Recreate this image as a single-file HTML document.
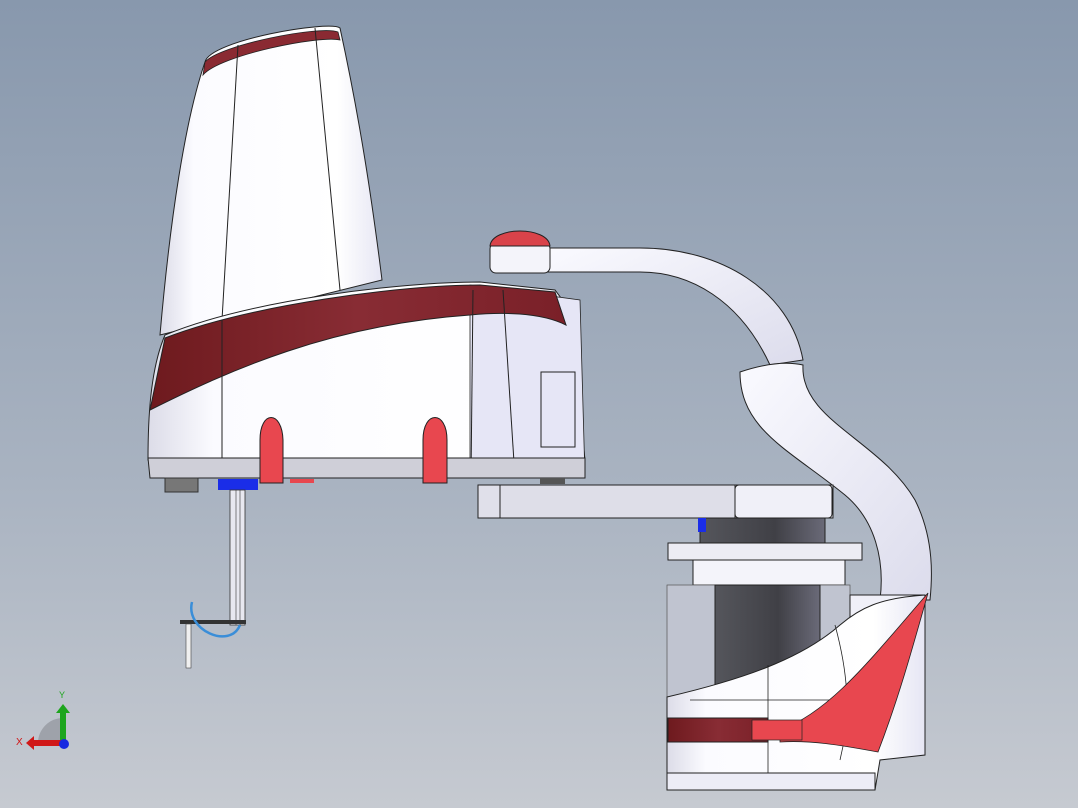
<!DOCTYPE html>
<html><head><meta charset="utf-8"><style>
html,body{margin:0;padding:0;width:1078px;height:808px;overflow:hidden}
svg{display:block}
text{font-family:"Liberation Sans",sans-serif}
</style></head><body>
<svg width="1078" height="808" viewBox="0 0 1078 808" xmlns="http://www.w3.org/2000/svg">
<defs>
<linearGradient id="bg" x1="0" y1="0" x2="0" y2="1">
<stop offset="0" stop-color="#8898ad"/><stop offset="0.6" stop-color="#a9b3c1"/><stop offset="1" stop-color="#c6cad1"/>
</linearGradient>
<linearGradient id="wh" x1="0" y1="0" x2="1" y2="0">
<stop offset="0" stop-color="#dcdce8"/><stop offset="0.15" stop-color="#fbfbff"/><stop offset="0.8" stop-color="#ffffff"/><stop offset="1" stop-color="#e6e6f4"/>
</linearGradient>
<linearGradient id="red" x1="0" y1="0" x2="1" y2="0">
<stop offset="0" stop-color="#6e1a1e"/><stop offset="0.5" stop-color="#882c34"/><stop offset="1" stop-color="#7a2028"/>
</linearGradient>
<linearGradient id="dk" x1="0" y1="0" x2="1" y2="0">
<stop offset="0" stop-color="#55565c"/><stop offset="0.6" stop-color="#404046"/><stop offset="1" stop-color="#6a6a78"/>
</linearGradient>
<linearGradient id="tube" x1="0" y1="0" x2="1" y2="1">
<stop offset="0" stop-color="#fafaff"/><stop offset="1" stop-color="#dcdcec"/>
</linearGradient>
</defs>
<rect width="1078" height="808" fill="url(#bg)"/>

<!-- cable tube -->
<path d="M545 248 L640 248 C720 248 790 290 803 360 L770 365 C740 300 690 272 640 272 L545 272 Z" fill="url(#tube)" stroke="#222" stroke-width="1"/>
<path d="M740 372 C770 362 790 362 803 365 C800 420 880 440 915 500 C935 540 932 580 930 600 L880 600 C885 560 875 520 845 495 C790 450 740 430 740 372 Z" fill="url(#tube)" stroke="#222" stroke-width="1"/>

<!-- elbow joint -->
<rect x="490" y="243" width="60" height="30" rx="6" fill="#f4f4fa" stroke="#222"/>
<path d="M490 246 C492 226 548 226 550 246 Z" fill="#d9434a" stroke="#222"/>

<!-- arm 2 link -->
<rect x="478" y="485" width="355" height="33" fill="#e0e0ea" stroke="#222"/>
<rect x="500" y="485" width="235" height="33" fill="#dedee8" stroke="#222"/>
<rect x="735" y="485" width="97" height="33" rx="4" fill="#f0f0f8" stroke="#222"/>
<rect x="700" y="518" width="125" height="27" fill="url(#dk)" stroke="#222"/>
<rect x="698" y="518" width="8" height="14" fill="#1a2de8"/>
<!-- flange -->
<rect x="668" y="543" width="194" height="17" fill="#ececf4" stroke="#222"/>
<rect x="693" y="560" width="152" height="25" fill="#f4f4fa" stroke="#222"/>
<!-- transparent housing -->
<rect x="667" y="585" width="183" height="120" fill="#c0c4d0" stroke="#555" stroke-width="0.7"/>
<rect x="715" y="585" width="105" height="110" fill="url(#dk)" stroke="#222"/>
<!-- right panel -->
<rect x="850" y="595" width="75" height="158" fill="#f0f0f8" stroke="#222"/>
<rect x="888" y="667" width="18" height="38" fill="#666" stroke="#222"/>
<rect x="882" y="715" width="16" height="40" fill="#666" stroke="#222"/>
<!-- lower base -->
<path d="M667 697 C740 680 800 660 840 625 C860 608 880 598 925 595 L925 755 L880 760 L875 790 L667 790 Z" fill="url(#wh)" stroke="#222"/>
<path d="M768 665 L768 775 M690 700 L830 700 M835 625 C850 680 850 720 840 760" fill="none" stroke="#222" stroke-width="0.8"/>
<path d="M780 730 C830 712 870 660 928 593 C912 650 898 700 878 752 C840 745 810 740 780 742 Z" fill="#e8474f" stroke="#222" stroke-width="0.8"/>
<rect x="668" y="718" width="100" height="24" fill="url(#red)" stroke="#222"/>
<rect x="752" y="720" width="50" height="20" fill="#e8474f" stroke="#222" stroke-width="0.7"/>
<rect x="667" y="773" width="208" height="17" fill="#ececf6" stroke="#222"/>

<!-- tower -->
<path d="M205 62 C210 40 330 20 340 28 C360 120 372 200 382 280 L160 335 C170 220 185 120 205 62 Z" fill="url(#wh)" stroke="#222"/>
<path d="M205 62 C220 45 320 25 338 32 L340 40 C320 35 220 55 203 75 Z" fill="#8a2a32" stroke="#222" stroke-width="0.8"/>
<line x1="238" y1="45" x2="222" y2="320" stroke="#222"/>
<line x1="315" y1="28" x2="340" y2="290" stroke="#222"/>

<!-- base body -->
<path d="M165 335 C250 300 400 282 480 282 L555 290 L570 310 L585 460 L148 460 C148 420 150 370 165 335 Z" fill="url(#wh)" stroke="#222"/>
<path d="M470 285 L580 300 L585 478 L470 478 Z" fill="#e6e6f6" stroke="#222" stroke-width="0.8"/>
<path d="M165 338 C250 305 400 285 480 285 L555 292 L566 325 C540 312 500 312 470 315 C330 325 230 370 150 410 Z" fill="url(#red)" stroke="#222"/>
<line x1="222" y1="320" x2="222" y2="478" stroke="#222"/>
<line x1="473" y1="290" x2="471" y2="478" stroke="#222"/>
<line x1="503" y1="290" x2="515" y2="478" stroke="#222"/>
<rect x="541" y="372" width="34" height="75" fill="none" stroke="#222"/>
<path d="M148 458 L585 458 L585 478 L150 478 Z" fill="#cfcfd8" stroke="#222"/>
<!-- feet -->
<path d="M260 440 C260 410 282 410 283 440 L283 483 L260 483 Z" fill="#e8474f" stroke="#222"/>
<path d="M423 440 C423 410 447 410 447 440 L447 483 L423 483 Z" fill="#e8474f" stroke="#222"/>
<rect x="290" y="479" width="24" height="4" fill="#e8474f"/>
<rect x="165" y="478" width="33" height="14" fill="#777" stroke="#333"/>
<rect x="218" y="479" width="40" height="11" fill="#1a2de8"/>
<rect x="540" y="478" width="25" height="6" fill="#555"/>
<!-- shaft -->
<rect x="230" y="490" width="15" height="135" fill="#e8e8f0" stroke="#333" stroke-width="0.8"/>
<line x1="236" y1="490" x2="236" y2="625" stroke="#333" stroke-width="0.6"/>
<line x1="240" y1="490" x2="240" y2="625" stroke="#333" stroke-width="0.6"/>
<rect x="180" y="620" width="66" height="4" fill="#333"/>
<rect x="186" y="624" width="5" height="44" fill="#f0f0f0" stroke="#444" stroke-width="0.6"/>
<path d="M192 602 C185 630 230 650 240 625" fill="none" stroke="#3a8ed8" stroke-width="2.5"/>

<!-- axis triad -->
<path d="M38 743 A25 25 0 0 1 63 718 L63 743 Z" fill="#9ea2aa"/>
<rect x="60" y="712" width="6" height="30" fill="#1da51d"/>
<path d="M56 713 L63 704 L70 713 Z" fill="#1da51d"/>
<rect x="33" y="740" width="30" height="6" fill="#d01818"/>
<path d="M34 736 L26 743 L34 750 Z" fill="#d01818"/>
<circle cx="64" cy="744" r="5" fill="#1828e0"/>
<text x="59" y="698" font-size="9" fill="#1da51d">Y</text>
<text x="16" y="745" font-size="10" fill="#d01818">X</text>
</svg>
</body></html>
